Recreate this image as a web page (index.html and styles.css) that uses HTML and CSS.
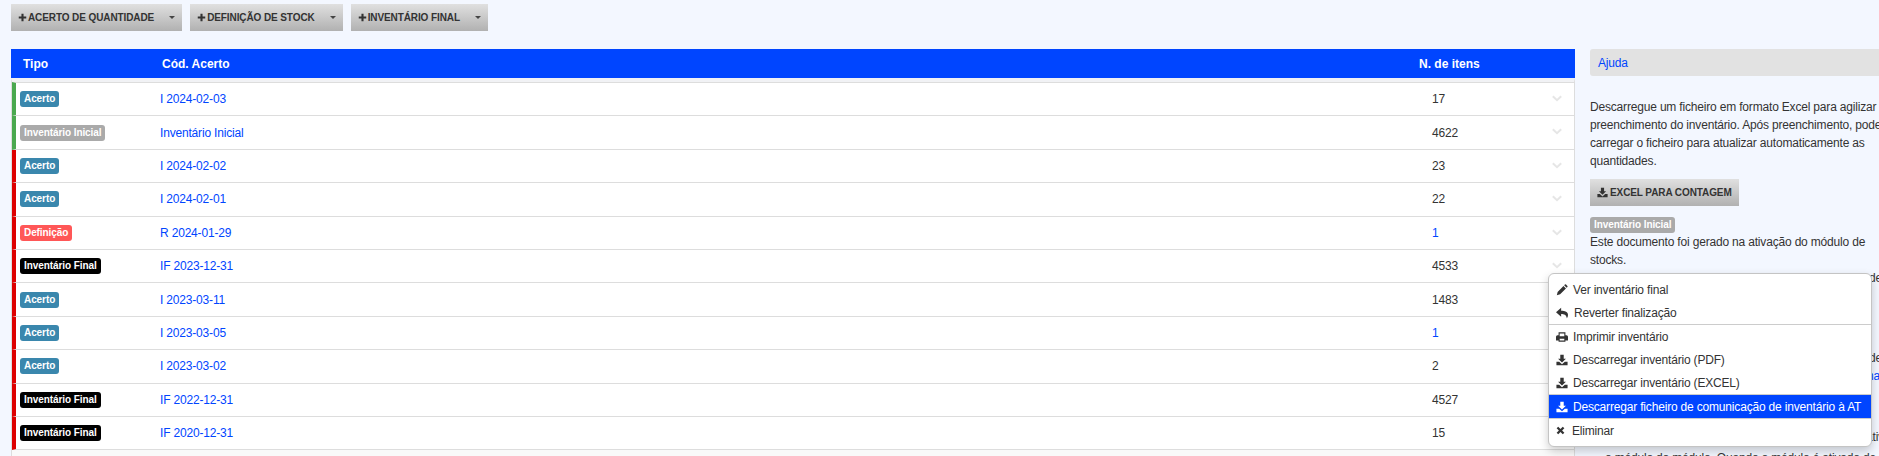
FILE: index.html
```html
<!DOCTYPE html>
<html lang="pt">
<head>
<meta charset="utf-8">
<title>Inventário</title>
<link rel="stylesheet" href="styles.css">
</head>
<body>
<svg width="0" height="0" class="defs">
  <defs>
    <symbol id="i-plus" viewBox="0 0 12 12"><path d="M4.600 1h2.800v3.600H11v2.800H7.400V11H4.600V7.400H1V4.600h3.600z"/></symbol>
    <symbol id="i-dl" viewBox="0 0 14 14"><path d="M5 1h4v4.500h2.600L7 10 2.400 5.500H5z"/><path d="M0.500 9h3.200L7 12l3.300-3h3.200v4h-13z"/></symbol>
    <symbol id="i-pencil" viewBox="0 0 14 14"><path d="M1 13l.9-3.800 6.800-6.800 2.900 2.900-6.800 6.800zM9.500 1.600l.9-.9a1 1 0 0 1 1.300 0l1.600 1.600a1 1 0 0 1 0 1.300l-.9.9z"/></symbol>
    <symbol id="i-reply" viewBox="0 0 14 14"><path d="M6 1L0 6.200 6 11.400V8.200c3.500 0 5.700 .8 6.700 4.800.9-1.100 1.300-2.400 1.300-3.800C14 5.500 10.500 4.300 6 4.300z"/></symbol>
    <symbol id="i-print" viewBox="0 0 14 14"><path fill-rule="evenodd" d="M3 1.500h8V5h1.200A1.800 1.800 0 0 1 14 6.800V11h-3v1.500H3V11H0V6.800A1.800 1.800 0 0 1 1.800 5H3zM4.300 2.800V6h5.400V2.800zM4.300 9v2.200h5.400V9z"/></symbol>
    <symbol id="i-x" viewBox="0 0 14 14"><path d="M3.500 1L7 4.500 10.500 1 13 3.500 9.500 7l3.500 3.500L10.500 13 7 9.500 3.500 13 1 10.500 4.500 7 1 3.500z"/></symbol>
    <symbol id="i-chev" viewBox="0 0 10 7"><path d="M.8 1.200L5 5.200l4.200-4"/></symbol>
  </defs>
</svg>

<div class="toolbar">
  <button class="btn"><svg class="ico-plus"><use href="#i-plus"/></svg>ACERTO DE QUANTIDADE<span class="caret"></span></button>
  <button class="btn"><svg class="ico-plus"><use href="#i-plus"/></svg>DEFINIÇÃO DE STOCK<span class="caret"></span></button>
  <button class="btn"><svg class="ico-plus"><use href="#i-plus"/></svg>INVENTÁRIO FINAL<span class="caret"></span></button>
</div>

<div class="layout">
  <main class="main">
    <div class="thead">
      <span class="c-type">Tipo</span>
      <span class="c-code">Cód. Acerto</span>
      <span class="c-num">N. de itens</span>
    </div>
    <div class="rows">
      <div class="row green"><span class="c-type"><span class="label acerto">Acerto</span></span><a class="c-code" href="#">I 2024-02-03</a><span class="c-num">17</span><svg class="chev"><use href="#i-chev"/></svg></div>
      <div class="row green"><span class="c-type"><span class="label inicial">Inventário Inicial</span></span><a class="c-code" href="#">Inventário Inicial</a><span class="c-num">4622</span><svg class="chev"><use href="#i-chev"/></svg></div>
      <div class="row red"><span class="c-type"><span class="label acerto">Acerto</span></span><a class="c-code" href="#">I 2024-02-02</a><span class="c-num">23</span><svg class="chev"><use href="#i-chev"/></svg></div>
      <div class="row red"><span class="c-type"><span class="label acerto">Acerto</span></span><a class="c-code" href="#">I 2024-02-01</a><span class="c-num">22</span><svg class="chev"><use href="#i-chev"/></svg></div>
      <div class="row red"><span class="c-type"><span class="label definicao">Definição</span></span><a class="c-code" href="#">R 2024-01-29</a><a class="c-num" href="#">1</a><svg class="chev"><use href="#i-chev"/></svg></div>
      <div class="row red"><span class="c-type"><span class="label final">Inventário Final</span></span><a class="c-code" href="#">IF 2023-12-31</a><span class="c-num">4533</span><svg class="chev"><use href="#i-chev"/></svg></div>
      <div class="row red"><span class="c-type"><span class="label acerto">Acerto</span></span><a class="c-code" href="#">I 2023-03-11</a><span class="c-num">1483</span><svg class="chev"><use href="#i-chev"/></svg></div>
      <div class="row red"><span class="c-type"><span class="label acerto">Acerto</span></span><a class="c-code" href="#">I 2023-03-05</a><a class="c-num" href="#">1</a><svg class="chev"><use href="#i-chev"/></svg></div>
      <div class="row red"><span class="c-type"><span class="label acerto">Acerto</span></span><a class="c-code" href="#">I 2023-03-02</a><span class="c-num">2</span><svg class="chev"><use href="#i-chev"/></svg></div>
      <div class="row red"><span class="c-type"><span class="label final">Inventário Final</span></span><a class="c-code" href="#">IF 2022-12-31</a><span class="c-num">4527</span><svg class="chev"><use href="#i-chev"/></svg></div>
      <div class="row red"><span class="c-type"><span class="label final">Inventário Final</span></span><a class="c-code" href="#">IF 2020-12-31</a><span class="c-num">15</span><svg class="chev"><use href="#i-chev"/></svg></div>
    </div>
  </main>

  <aside class="side">
    <div class="side-head"><a href="#">Ajuda</a></div>
    <p class="side-p">Descarregue um ficheiro em formato Excel para agilizar o preenchimento do inventário. Após preenchimento, pode carregar o ficheiro para atualizar automaticamente as quantidades.</p>
    <button class="btn btn-side"><svg class="ico-dl"><use href="#i-dl"/></svg>EXCEL PARA CONTAGEM</button>
    <div class="side-item">
      <span class="label inicial block">Inventário Inicial</span>
      <p class="side-text">Este documento foi gerado na ativação do módulo de stocks.</p>
    </div>
    <p class="frag f1">de</p>
    <p class="frag f2">de</p>
    <p class="frag f3"><a href="#">na</a></p>
    <p class="frag f4">ativ</p>
    <p class="frag-line">o módulo do módulo. Quando o módulo é ativado de</p>
  </aside>
</div>

<ul class="menu">
  <li><svg class="mi"><use href="#i-pencil"/></svg>Ver inventário final</li>
  <li><svg class="mi mi-wide"><use href="#i-reply"/></svg>Reverter finalização</li>
  <li class="sep"></li>
  <li><svg class="mi"><use href="#i-print"/></svg>Imprimir inventário</li>
  <li><svg class="mi"><use href="#i-dl"/></svg>Descarregar inventário (PDF)</li>
  <li><svg class="mi"><use href="#i-dl"/></svg>Descarregar inventário (EXCEL)</li>
  <li class="sep"></li>
  <li class="active"><svg class="mi"><use href="#i-dl"/></svg>Descarregar ficheiro de comunicação de inventário à AT</li>
  <li class="sep"></li>
  <li><svg class="mi mi-x"><use href="#i-x"/></svg>Eliminar</li>
</ul>
</body>
</html>
```
FILE: styles.css
```css
* { box-sizing: border-box; }
html, body { margin: 0; height: 456px; overflow: hidden; }
body {
  background: #f3f7ff;
  font-family: "Liberation Sans", Arial, sans-serif;
  font-size: 12px;
  line-height: 18px;
  color: #333;
  width: 1879px;
  position: relative;
}
.defs { position: absolute; }
a { color: #0045ff; text-decoration: none; }

.toolbar { display: flex; gap: 8px; padding: 4px 11px 0; height: 49px; }
.btn {
  display: inline-flex;
  align-items: center;
  height: 27px;
  padding: 0 7px;
  border: 0;
  background: linear-gradient(#e0e0e0, #b1b1b1);
  color: #333;
  font: bold 10px/18px "Liberation Sans", Arial, sans-serif;
  letter-spacing: -.1px;
}
.ico-plus { width: 9px; height: 9px; margin-right: 1px; fill: #333; flex: none; }
.caret {
  width: 0; height: 0;
  margin-left: 15px;
  border-top: 3px solid #444;
  border-left: 3px solid transparent;
  border-right: 3px solid transparent;
}

.layout { display: flex; gap: 15px; padding-left: 11px; }
.main { width: 1564px; flex: none; }
.thead {
  display: flex;
  align-items: center;
  height: 29px;
  background: #0045ff;
  color: #fff;
  font-weight: bold;
}
.thead .c-type { width: 151px; padding-left: 12px; flex: none; }
.thead .c-code { width: 1257px; flex: none; }

.rows {
  border-top: 4px solid #f1f2f5;
  border-left: 1px solid #ddd;
  border-right: 1px solid #ddd;
  background: #f9f9f9;
  height: 379px;
}
.row {
  display: flex;
  align-items: center;
  height: 33.400px;
  background: #fff;
  border-bottom: 1px solid #ddd;
  border-left: 4px solid #d00;
  position: relative;
  letter-spacing: -.18px;
}
.row:first-child { height: 34.400px; border-top: 1px solid #ddd; }
.row.green { border-left-color: #4aa84f; }
.row .c-type { width: 144px; padding-left: 4px; flex: none; display: flex; }
.row .c-code { width: 1272px; flex: none; }
.row .c-num { color: #333; flex: none; }
.row a.c-num { color: #0045ff; }
.chev {
  position: absolute;
  right: 12px;
  top: 12px;
  width: 10px;
  height: 7px;
  fill: none;
  stroke: #e6e6e6;
  stroke-width: 2;
}

.label {
  display: inline-block;
  padding: 0 4px;
  height: 16px;
  border-radius: 3px;
  color: #fff;
  font-size: 10px;
  font-weight: bold;
  line-height: 15px;
  letter-spacing: -.08px;
  white-space: nowrap;
}
.label.block { display: block; width: fit-content; }
.acerto { background: #3a87ad; }
.inicial { background: #aaa; }
.definicao { background: #ff5757; }
.final { background: #000; }

.side { width: 310px; flex: none; letter-spacing: -.18px; }
.side-head {
  height: 27px;
  padding: 0 8px;
  background: #e2e2e2;
  border-radius: 3px 0 0 3px;
  display: flex;
  align-items: center;
}
.side-p { margin: 22px 0 9px; }
.ico-dl { width: 11px; height: 11px; margin-right: 2px; fill: #333; flex: none; }
.side-item { margin-top: 11px; }
.side-text { margin: 0; }

.frag { margin: 0; padding-right: 18px; text-align: right; }
.f2 { margin-top: 62px; }
.f4 { margin-top: 43px; padding-right: 16px; }
.f3 { padding-right: 20px; }
.frag-line { margin: 3px 0 0; padding-left: 15px; white-space: nowrap; }

.menu {
  position: absolute;
  left: 1548px;
  top: 273px;
  width: 324px;
  height: 174px;
  margin: 0;
  padding: 4px 0;
  list-style: none;
  background: #fff;
  border: 1px solid #c4c4c4;
  border-radius: 6px;
  box-shadow: 0 4px 10px rgba(0, 0, 0, .2);
  white-space: nowrap;
  letter-spacing: -.18px;
}
.menu li { display: flex; align-items: center; height: 23px; padding: 0 7px; color: #333; }
.menu li.sep { height: 1px; padding: 0; background: #ccc; }
.menu li.active { background: #0045ff; color: #fff; }
.mi { width: 12px; height: 12px; margin-right: 5px; fill: #333; flex: none; }
.mi-wide { margin-right: 6px; }
.mi-x { width: 9px; height: 9px; margin-right: 7px; }
.active .mi { fill: #fff; }
```
